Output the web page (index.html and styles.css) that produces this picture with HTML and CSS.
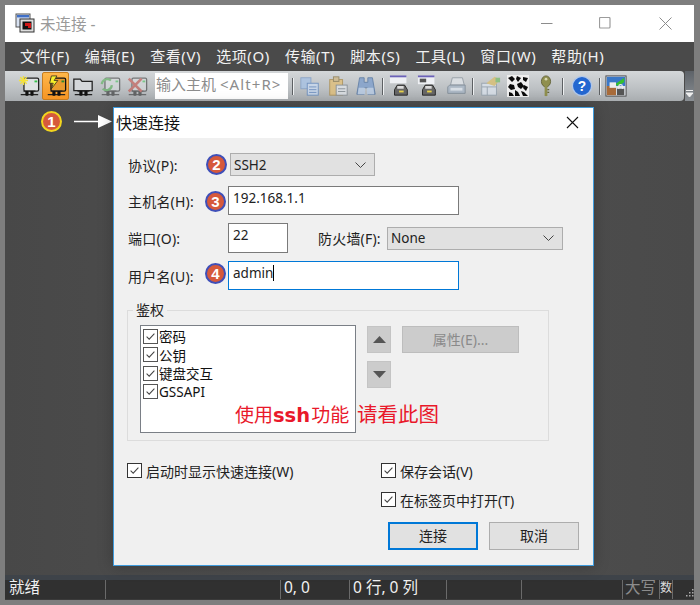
FILE: index.html
```html
<!DOCTYPE html>
<html lang="zh">
<head>
<meta charset="utf-8">
<title>未连接 -</title>
<link rel="stylesheet" href="styles.css">
</head>
<body>
<svg class="defs" width="0" height="0">
  <defs>
    <symbol id="plug" viewBox="0 0 24 24">
      <path d="M6 17.500h13M3 21.500h19" stroke="#222" stroke-width="1.400" fill="none"/>
      <rect x="8" y="17.500" width="3.500" height="5" rx="1" fill="#111"/>
      <rect x="13.500" y="17.500" width="3.500" height="5" rx="1" fill="#111"/>
    </symbol>
    <symbol id="mon" viewBox="0 0 24 24">
      <rect x="6.500" y="3.500" width="16" height="14" rx="1.500" fill="#dfe2e4" stroke="#222" stroke-width="1.400"/>
      <rect x="18" y="6" width="3" height="2" fill="#35c34a"/>
    </symbol>
    <symbol id="check" viewBox="0 0 15 15">
      <path d="M3 7.600l3 3 6-6.400" fill="none" stroke="#444" stroke-width="1.200"/>
    </symbol>
  </defs>
</svg>

<div class="app">
  <header class="titlebar">
    <svg class="appicon" viewBox="0 0 20 20" width="20" height="20">
      <rect x="1" y="1" width="14" height="13" fill="#d8e2f2" stroke="#555"/>
      <rect x="2" y="2" width="12" height="2.400" fill="#3f6fc7"/>
      <rect x="5" y="6" width="14" height="13" fill="#ddd" stroke="#333"/>
      <rect x="7.500" y="8.500" width="9" height="8" fill="#111"/>
      <path d="M10 10h6v5h-3v-2h-3z" fill="#d01818"/>
    </svg>
    <span class="wintitle">未连接 -</span>
    <div class="winbtns">
      <svg width="12" height="12" viewBox="0 0 12 12"><path d="M0 6.500h11.500" stroke="#8c8c8c"/></svg>
      <svg width="12" height="12" viewBox="0 0 12 12"><rect x=".5" y=".5" width="10.500" height="10.500" rx="1" fill="none" stroke="#9c9c9c" stroke-width="1.200"/></svg>
      <svg width="13" height="13" viewBox="0 0 13 13"><path d="M.5.500l12 12M12.500.5l-12 12" stroke="#8c8c8c"/></svg>
    </div>
  </header>

  <nav class="menubar">
    <span>文件(F)</span><span>编辑(E)</span><span>查看(V)</span><span>选项(O)</span><span>传输(T)</span><span>脚本(S)</span><span>工具(L)</span><span>窗口(W)</span><span>帮助(H)</span>
  </nav>

  <div class="toolstrip">
    <div class="toolbar">
      <span class="tool">
        <svg viewBox="0 0 24 24"><use href="#mon"/><use href="#plug"/><path d="M6 1v10M1 6h10M2.500 2.500l7 7M9.500 2.500l-7 7" stroke="#f4e23a" stroke-width="1.500"/></svg>
      </span>
      <span class="tool active">
        <svg viewBox="0 0 24 24"><rect x="6.500" y="3.500" width="16" height="14" rx="1.500" fill="#e79a2e" stroke="#111" stroke-width="1.400"/><rect x="18" y="6" width="3" height="2" fill="#2c8a2e"/><use href="#plug"/><path d="M7 1h6l-3 5h4l-7 9 2-6H5z" fill="#f6f02a" stroke="#222" stroke-width=".8"/></svg>
      </span>
      <span class="tool">
        <svg viewBox="0 0 24 24"><path d="M2 17V4.500h7l2 2.500h11v10z" fill="#d4d7da" stroke="#222" stroke-width="1.400"/><use href="#plug"/></svg>
      </span>
      <span class="tool faded">
        <svg viewBox="0 0 24 24"><use href="#mon"/><use href="#plug"/><path d="M3 10a6 6 0 0 1 10-4M14 11a6 6 0 0 1-10 4" stroke="#41ad41" stroke-width="2.400" fill="none"/></svg>
      </span>
      <span class="tool faded">
        <svg viewBox="0 0 24 24"><use href="#mon"/><use href="#plug"/><path d="M3 4l14 14M17 4L3 18" stroke="#c43a30" stroke-width="2.800"/></svg>
      </span>
      <span class="hostinput">输入主机 <span class="hint">&lt;Alt+R&gt;</span></span>
      <i class="sep"></i>
      <span class="tool pale">
        <svg viewBox="0 0 24 24"><rect x="2" y="3" width="11" height="12" fill="#a7c2e4" stroke="#7e9cc4"/><rect x="9" y="9" width="12" height="13" fill="#c9d9ef" stroke="#5f86bd"/><path d="M11 13h8M11 16h8M11 19h8" stroke="#5f86bd"/></svg>
      </span>
      <span class="tool pale">
        <svg viewBox="0 0 24 24"><rect x="3" y="5" width="14" height="17" fill="#e0bf7a" stroke="#a88a4a"/><rect x="7" y="2" width="6" height="5" fill="#cfb98a" stroke="#8a7a50"/><rect x="10" y="11" width="12" height="11" fill="#dfe3e7" stroke="#7d858c"/><path d="M12 15h8M12 18h8" stroke="#7d858c"/></svg>
      </span>
      <span class="tool pale">
        <svg viewBox="0 0 24 24"><path d="M5 3h5v5h4V3h5l3 18h-8v-7h-4v7H2z" fill="#7f9fcc" stroke="#50729f"/><path d="M4 14h7v7H3zM13 14h7l1 7h-8z" fill="#b8cce6"/></svg>
      </span>
      <i class="sep"></i>
      <span class="tool">
        <svg viewBox="0 0 24 24"><rect x="1" y="1" width="18" height="8" fill="#eef0f4"/><path d="M1 1.500h18" stroke="#6b62b8" stroke-width="2"/><path d="M9 11h8l3 5v6H6v-6z" fill="#666" stroke="#222"/><rect x="9" y="12" width="7" height="3" fill="#ddd"/><rect x="11" y="17" width="5" height="2" fill="#e7d24a"/></svg>
      </span>
      <span class="tool">
        <svg viewBox="0 0 24 24"><rect x="1" y="1" width="18" height="9" fill="#eef0f4"/><path d="M1 1.500h18" stroke="#6b62b8" stroke-width="2"/><rect x="3" y="4" width="7" height="4" fill="#555"/><path d="M9 11h8l3 5v6H6v-6z" fill="#666" stroke="#222"/><rect x="9" y="12" width="7" height="3" fill="#ddd"/><rect x="11" y="17" width="5" height="2" fill="#e7d24a"/></svg>
      </span>
      <span class="tool pale">
        <svg viewBox="0 0 24 24"><path d="M8 3h11l2 8H6z" fill="#dfe3e7" stroke="#8a949c"/><path d="M5 11h17v9H3v-7z" fill="#a9b7c6" stroke="#76838f"/><rect x="6" y="14" width="13" height="3" fill="#dfe6ee"/></svg>
      </span>
      <i class="sep"></i>
      <span class="tool pale">
        <svg viewBox="0 0 24 24"><rect x="3" y="9" width="16" height="13" fill="#dbe3ec" stroke="#8f9da9"/><path d="M3 13h16M9 13v9" stroke="#8f9da9"/><path d="M8 9l9-7 6 3-6 7z" fill="#d9bf72"/><rect x="18" y="3" width="5" height="5" fill="#7fbd72"/></svg>
      </span>
      <span class="tool">
        <svg viewBox="0 0 22 22"><rect width="22" height="22" fill="#eee"/><path d="M1 3l4-2 3 3-3 3zM10 1l4 2-3 4-2-3zM16 2l5 1-2 4-3-2zM3 9l4 1 1 4-4 1-3-3zM10 9l4-2 3 4-3 3-3-2zM17 10l4 2-2 4-3-3zM2 17l3 1 2 3H2zM8 15l3 2 2 4h-5zM14 16l3 1 4 4h-5z" fill="#0a0a0a"/></svg>
      </span>
      <span class="tool">
        <svg viewBox="0 0 24 24"><ellipse cx="12" cy="7" rx="5" ry="6" fill="#8f8f4e" stroke="#63633a"/><circle cx="12" cy="4.500" r="1.500" fill="#d7d7b0"/><path d="M10.500 12h3v11h-3z" fill="#8f8f4e"/><path d="M13.500 16h2M13.500 19h2" stroke="#63633a" stroke-width="1.500"/></svg>
      </span>
      <i class="sep sep-help"></i>
      <span class="tool">
        <svg viewBox="0 0 24 24"><circle cx="12" cy="12" r="10.500" fill="#2467d0" stroke="#b3c8e8" stroke-width="1.500"/><text class="qmark" x="12" y="17.500" text-anchor="middle">?</text></svg>
      </span>
      <i class="sep sep-last"></i>
      <span class="tool">
        <svg viewBox="0 0 24 24"><rect x="1" y="1" width="22" height="22" fill="#dfe4ea" stroke="#444"/><rect x="2" y="2" width="20" height="10" fill="#3a78c8"/><path d="M11 10l10-7v5l-7 4z" fill="#35c02e"/><rect x="2" y="12" width="10" height="10" fill="#a86b3a"/><rect x="5" y="8" width="7" height="6" fill="#eee"/><rect x="13" y="15" width="8" height="7" fill="#555"/><path d="M15 15v-2.500a2 2 0 0 1 4 0V15" stroke="#eee" fill="none" stroke-width="1.300"/></svg>
      </span>
    </div>
    <div class="chevron">
      <svg width="9" height="9" viewBox="0 0 9 9"><path d="M1 1.500h7M1 4h7l-3.500 4z" stroke="#eee" fill="#eee" stroke-width="1"/></svg>
    </div>
  </div>

  <main class="workspace">
    <div class="anno-arrow">
      <span class="badge badge-yellow">1</span>
      <svg width="38" height="13" viewBox="0 0 38 13"><path d="M0 6.500h26" stroke="#fff" stroke-width="1.500"/><path d="M24 0l14 6.500-14 6.500z" fill="#fff"/></svg>
    </div>

    <section class="dialog">
      <div class="dlg-title">
        <span>快速连接</span>
        <svg width="13" height="13" viewBox="0 0 13 13"><path d="M1 1l11 11M12 1L1 12" stroke="#111" stroke-width="1.100"/></svg>
      </div>
      <div class="dlg-body">
        <div class="form">
          <div class="row r1">
            <label>协议(P):</label>
            <span class="select sel-proto">SSH2<svg width="11" height="6" viewBox="0 0 11 6"><path d="M.5.500l5 5 5-5" fill="none" stroke="#444"/></svg></span>
            <span class="badge badge-blue b2">2</span>
          </div>
          <div class="row r2">
            <label>主机名(H):</label>
            <span class="input wide">192.168.1.1</span>
            <span class="badge badge-blue b3">3</span>
          </div>
          <div class="row r3">
            <label>端口(O):</label>
            <span class="input port">22</span>
            <label class="fw">防火墙(F):</label>
            <span class="select sel-fw">None<svg width="11" height="6" viewBox="0 0 11 6"><path d="M.5.500l5 5 5-5" fill="none" stroke="#444"/></svg></span>
          </div>
          <div class="row r4">
            <label>用户名(U):</label>
            <span class="input wide focus">admin<i class="caret"></i></span>
            <span class="badge badge-blue b4">4</span>
          </div>
        </div>

        <div class="group">
          <span class="legend">鉴权</span>
          <div class="group-inner">
            <ul class="authlist">
              <li><span class="cb"><svg viewBox="0 0 15 15"><use href="#check"/></svg></span>密码</li>
              <li><span class="cb"><svg viewBox="0 0 15 15"><use href="#check"/></svg></span>公钥</li>
              <li><span class="cb"><svg viewBox="0 0 15 15"><use href="#check"/></svg></span>键盘交互</li>
              <li><span class="cb"><svg viewBox="0 0 15 15"><use href="#check"/></svg></span>GSSAPI</li>
            </ul>
            <div class="arrows">
              <span class="sqbtn"><svg width="13" height="7" viewBox="0 0 13 7"><path d="M6.500 0L13 7H0z" fill="#555"/></svg></span>
              <span class="sqbtn"><svg width="13" height="7" viewBox="0 0 13 7"><path d="M0 0h13L6.500 7z" fill="#555"/></svg></span>
            </div>
            <span class="propbtn">属性(E)...</span>
          </div>
          <p class="note">使用<b>ssh</b>功能 <span class="note-end">请看此图</span></p>
        </div>

        <div class="options">
          <div class="opt"><span class="cb dark"><svg viewBox="0 0 15 15"><use href="#check"/></svg></span>启动时显示快速连接(W)</div>
          <div class="opt-col">
            <div class="opt"><span class="cb dark"><svg viewBox="0 0 15 15"><use href="#check"/></svg></span>保存会话(V)</div>
            <div class="opt"><span class="cb dark"><svg viewBox="0 0 15 15"><use href="#check"/></svg></span>在标签页中打开(T)</div>
          </div>
        </div>

        <div class="actions">
          <span class="btn primary">连接</span>
          <span class="btn">取消</span>
        </div>
      </div>
    </section>
  </main>

  <footer class="statusbar">
    <span>就绪</span>
    <span></span>
    <span>0, 0</span>
    <span>0 行, 0 列</span>
    <span></span>
    <span></span>
    <span class="dim">大写</span>
    <span class="clip">数</span>
    <span class="grip"><svg width="12" height="12" viewBox="0 0 12 12"><path d="M10 2h1.500v1.500H10zM7 5h1.500v1.500H7zM10 5h1.500v1.500H10zM4 8h1.500v1.500H4zM7 8h1.500v1.500H7zM10 8h1.500v1.500H10z" fill="#aaa"/></svg></span>
  </footer>
</div>
</body>
</html>
```
FILE: styles.css
```css
* { box-sizing: border-box; }
html, body { margin: 0; padding: 0; }
body {
  width: 700px;
  height: 605px;
  background: #7e7e7e;
  padding: 5px 6px 5px 5px;
  overflow: hidden;
  font-family: "Noto Sans", "Noto Sans CJK SC", sans-serif;
  font-size: 14px;
  color: #222;
}
.defs { position: absolute; }
.app { display: flex; flex-direction: column; height: 595px; background: #4a4a4a; }

.titlebar {
  height: 37px;
  background: #fff;
  display: flex;
  align-items: center;
  padding: 0 0 1px 10px;
  flex: none;
}
.wintitle { margin-left: 5px; font-size: 15.500px; color: #9a9a9a; }
.winbtns { margin-left: auto; display: flex; align-items: center; gap: 46px; padding-right: 22px; }
.winbtns svg:nth-child(3) { margin-left: 2px; }

.menubar {
  height: 29px;
  flex: none;
  background: #4a4a4a;
  color: #f2f2f2;
  display: flex;
  align-items: center;
  gap: 15px;
  padding: 0 0 2px 15px;
  font-size: 15px;
  letter-spacing: .6px;
  white-space: nowrap;
}

.toolstrip { height: 30px; flex: none; display: flex; background: #4a4a4a; }
.toolbar {
  width: 679px;
  display: flex;
  align-items: center;
  padding-left: 10px;
  background: linear-gradient(#d4d7d9, #bcc0c3 60%, #a9adb0);
  border-radius: 0 4px 4px 0;
}
.tool { width: 27px; height: 28px; flex: none; display: flex; align-items: center; justify-content: center; }
.tool svg { width: 22px; height: 22px; }
.hostinput ~ .tool { width: 28px; }
.tool.active { background: linear-gradient(#ffb74a, #f59524); border: 1px solid #c77d20; border-radius: 2px; }
.tool.faded svg { opacity: .5; }
.tool.pale svg { opacity: .8; }
.qmark { font: bold 15px "Liberation Sans", sans-serif; fill: #fff; }
.hostinput {
  width: 133px;
  height: 26px;
  flex: none;
  margin-left: 5px;
  background: #fff;
  color: #8c8c8c;
  font-size: 15px;
  line-height: 22px;
  padding-left: 1px;
  white-space: nowrap;
  overflow: hidden;
}
.hint { letter-spacing: 1.100px; }
.sep { width: 1px; height: 17px; background: #5d6063; box-shadow: 1px 0 0 #eef0f1; margin: 0 3px 0 2px; flex: none; }
.hostinput + .sep { margin-left: 4px; }
.sep-help { margin-right: 5px; }
.sep-last { margin: 0 2px 0 3px; }
.chevron { flex: 1; background: linear-gradient(#5d6268, #8a8f94); display: flex; align-items: flex-end; justify-content: center; padding-bottom: 3px; margin-left: 1px; }

.workspace { flex: 1; position: relative; background: linear-gradient(90deg, #484848, #505050 50%, #4a4a4a); }

.anno-arrow { position: absolute; left: 36px; top: 10px; display: flex; align-items: center; gap: 12px; }

.badge {
  width: 21px;
  height: 21px;
  border-radius: 50%;
  display: flex;
  align-items: center;
  justify-content: center;
  background: #d6593c;
  color: #fff;
  font: bold 15px "Liberation Sans", sans-serif;
  flex: none;
}
.badge-yellow { border: 2px solid #f2d51e; }
.badge-blue { border: 2px solid #3f4fb8; position: absolute; }

.dialog {
  position: absolute;
  left: 108px;
  top: 6px;
  width: 481px;
  height: 459px;
  background: #f0f0f0;
  border: 1px solid #3f9bdc;
  box-shadow: 0 0 14px rgba(0,0,0,.25);
}
.dlg-title {
  height: 30px;
  background: #fff;
  display: flex;
  align-items: center;
  justify-content: space-between;
  padding: 0 14px 2px 2px;
  font-size: 16px;
  color: #111;
}
.dlg-body { padding: 13px 14px 0 13px; position: relative; }

.form { display: flex; flex-direction: column; gap: 8px; }
.row { display: flex; align-items: center; position: relative; }
.row label { letter-spacing: .2px; }
.row label:first-child { width: 101px; flex: none; padding-left: 1px; }
.r1 { height: 27px; }
.r2, .r4 { height: 29px; }
.r3 { height: 30px; }
.b2 { left: 79px; top: 3px; }
.b3 { left: 78px; top: 5px; }
.b4 { left: 78px; top: 2px; }

.select {
  height: 23px;
  background: #e1e1e1;
  border: 1px solid #adadad;
  display: flex;
  align-items: center;
  justify-content: space-between;
  padding: 0 8px 0 3px;
  font-size: 13.500px;
}
.sel-proto { width: 145px; margin-left: 2px; }
.sel-fw { width: 176px; }
.fw { margin-left: 30px; width: 69px; flex: none; }

.input {
  height: 100%;
  background: #fff;
  border: 1px solid #7a7a7a;
  padding: 0 4px;
  line-height: 22px;
  font-size: 13.500px;
}
.wide { width: 231px; }
.port { width: 60px; }
.focus { border-color: #0078d7; }
.caret { display: inline-block; width: 1px; height: 16px; background: #000; vertical-align: -3px; }

.group {
  margin-top: 20px;
  width: 422px;
  height: 131px;
  border: 1px solid #dcdcdc;
  position: relative;
}
.legend { position: absolute; left: 5px; top: -11px; background: #f0f0f0; padding: 0 3px; line-height: 20px; }
.group-inner { display: flex; align-items: flex-start; padding: 14px 0 0 12px; }
.authlist {
  list-style: none;
  margin: 0;
  padding: 1px 2px;
  width: 216px;
  height: 108px;
  background: #fff;
  border: 1px solid #7a7f86;
}
.authlist li { display: flex; align-items: center; height: 18.500px; gap: 1px; color: #111; font-size: 13.500px; }
.cb { width: 15px; height: 15px; border: 1px solid #555; background: #fff; display: block; flex: none; }
.cb svg { display: block; width: 13px; height: 13px; }
.cb.dark { border-color: #333; }
.arrows { display: flex; flex-direction: column; gap: 8px; margin-left: 11px; margin-top: 1px; }
.sqbtn { width: 24px; height: 27px; background: #ccc; border: 1px solid #c4c4c4; display: flex; align-items: center; justify-content: center; }
.propbtn {
  width: 117px;
  height: 27px;
  margin-left: 11px;
  margin-top: 1px;
  background: #ccc;
  border: 1px solid #bdbdbd;
  color: #8a8a8a;
  text-align: center;
  line-height: 25px;
}
.note {
  position: absolute;
  left: 107px;
  top: 89px;
  margin: 0;
  font-size: 19px;
  line-height: 28px;
  color: #e9182a;
  white-space: nowrap;
}
.note b { font-family: "DejaVu Sans", sans-serif; font-weight: 700; font-size: 19.500px; margin-right: 1px; }
.note-end { font-size: 20.500px; margin-left: 3px; }

.options { display: flex; padding-top: 20px; }
.options > .opt { width: 254px; align-self: flex-start; }
.opt-col { display: flex; flex-direction: column; gap: 10px; }
.opt { display: flex; align-items: center; gap: 4px; height: 19px; white-space: nowrap; }

.actions { display: flex; justify-content: flex-end; gap: 11px; margin-top: 13px; }
.btn { width: 90px; height: 28px; background: #e1e1e1; border: 1px solid #adadad; text-align: center; line-height: 26px; }
.btn.primary { border: 2px solid #0078d7; line-height: 24px; }

.statusbar {
  height: 25px;
  flex: none;
  border-top: 5px solid #3e4349;
  background: #303030;
  display: grid;
  grid-template-columns: 101px 175px 69px 97px 75px 101px 37px 13px 1fr;
  color: #f0f0f0;
  font-size: 15.500px;
  line-height: 15px;
  border-bottom: 1px solid #3a3a3a;
}
.statusbar > span { border-right: 1px solid #6a6a6a; padding-left: 4px; white-space: nowrap; }
.statusbar > span:nth-child(3), .statusbar > span:nth-child(4) { padding-left: 3px; }
.statusbar > .dim { color: #8c8c8c; padding-left: 2px; }
.statusbar > .clip { padding-left: 0; color: #ddd; font-size: 12px; }
.statusbar > .grip { border-right: 0; display: flex; align-items: flex-end; justify-content: flex-end; padding: 0; }
```
